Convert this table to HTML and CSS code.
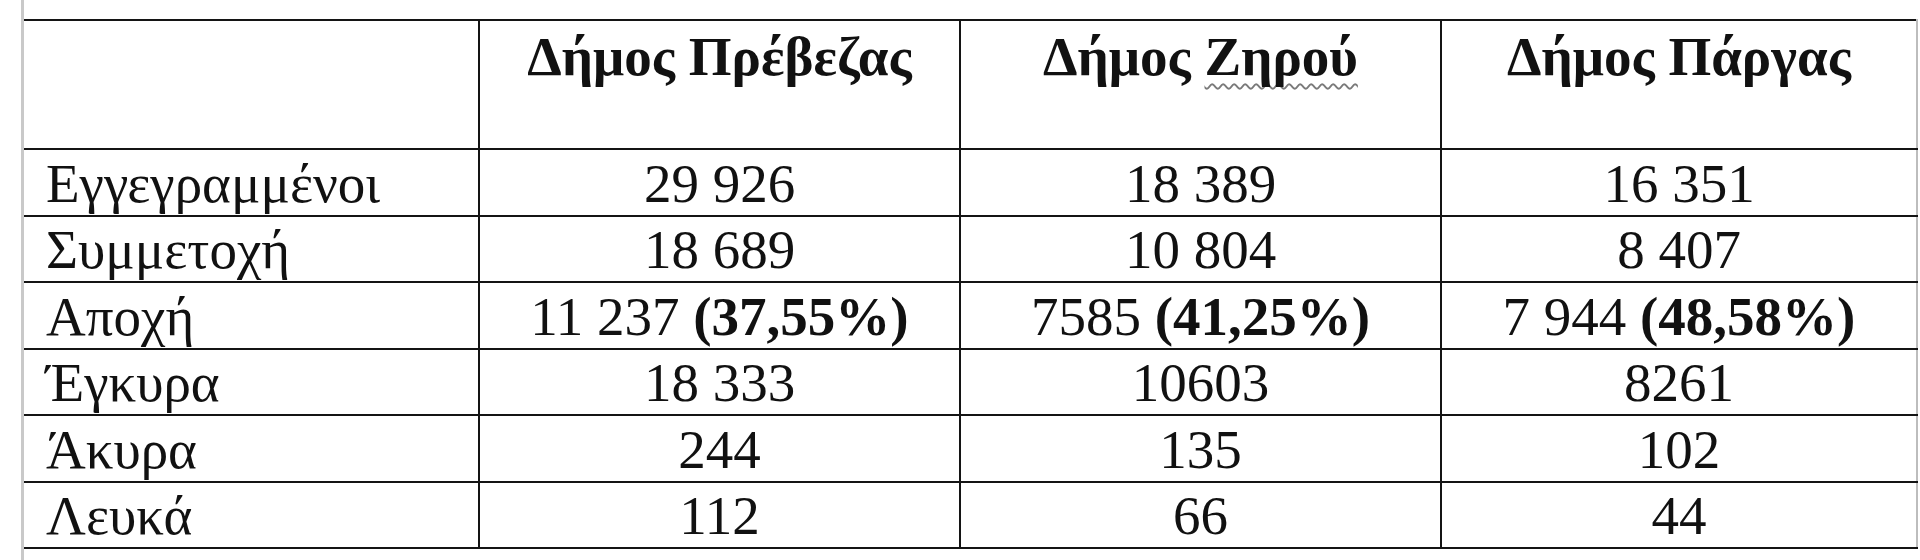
FILE: index.html
```html
<!DOCTYPE html>
<html lang="el">
<head>
<meta charset="utf-8">
<title>Εκλογικά αποτελέσματα</title>
<link rel="stylesheet" href="styles.css">
</head>
<body>
<div class="page">
  <table class="results">
    <colgroup>
      <col class="c-label">
      <col class="c-num">
      <col class="c-num">
      <col class="c-last">
    </colgroup>
    <thead>
      <tr class="head-row">
        <th></th>
        <th>Δήμος Πρέβεζας</th>
        <th>Δήμος <span class="spell">Ζηρού</span></th>
        <th>Δήμος Πάργας</th>
      </tr>
    </thead>
    <tbody>
      <tr><td>Εγγεγραμμένοι</td><td>29 926</td><td>18 389</td><td>16 351</td></tr>
      <tr><td>Συμμετοχή</td><td>18 689</td><td>10 804</td><td>8 407</td></tr>
      <tr><td>Αποχή</td><td>11 237 <b>(37,55%)</b></td><td>7585 <b>(41,25%)</b></td><td>7 944 <b>(48,58%)</b></td></tr>
      <tr><td>Έγκυρα</td><td>18 333</td><td>10603</td><td>8261</td></tr>
      <tr><td>Άκυρα</td><td>244</td><td>135</td><td>102</td></tr>
      <tr><td>Λευκά</td><td>112</td><td>66</td><td>44</td></tr>
    </tbody>
  </table>
</div>
</body>
</html>
```

FILE: styles.css
```css
html, body {
  margin: 0;
  padding: 0;
  background: #ffffff;
}

.page {
  box-sizing: border-box;
  height: 560px;
  margin-left: 21px;
  padding-top: 19px;
  border-left: 3px solid #c9c9c9;
}

.results {
  table-layout: fixed;
  border-collapse: collapse;
  width: 1893px;
  font-family: "Liberation Serif", "DejaVu Serif", "Times New Roman", serif;
  font-size: 55px;
  color: #111111;
  border-top: 2px solid #141414;
  border-bottom: 2px solid #141414;
  border-right: 2px solid #bdbdbd;
}

.c-label { width: 455px; }
.c-num { width: 481px; }
.c-last { width: 476px; }

.results th,
.results td {
  border: 2px solid #141414;
  padding: 0;
  line-height: 62px;
  text-align: center;
  white-space: nowrap;
}

.results tr > :first-child {
  border-left: none;
  text-align: left;
  padding-left: 22px;
}

.results tr > :last-child {
  border-right: 2px solid #bdbdbd;
}

.results th {
  font-weight: bold;
  vertical-align: top;
  padding-top: 5px;
}

.head-row {
  height: 129px;
}

.results tbody tr {
  height: 66.5px;
}

.results td {
  vertical-align: bottom;
  padding-bottom: 0;
}

.results b {
  font-weight: bold;
}

.spell {
  text-decoration-line: underline;
  text-decoration-style: wavy;
  text-decoration-color: #7a7a7a;
  text-decoration-thickness: 1.5px;
  text-decoration-skip-ink: none;
  text-underline-offset: 8px;
}
```
